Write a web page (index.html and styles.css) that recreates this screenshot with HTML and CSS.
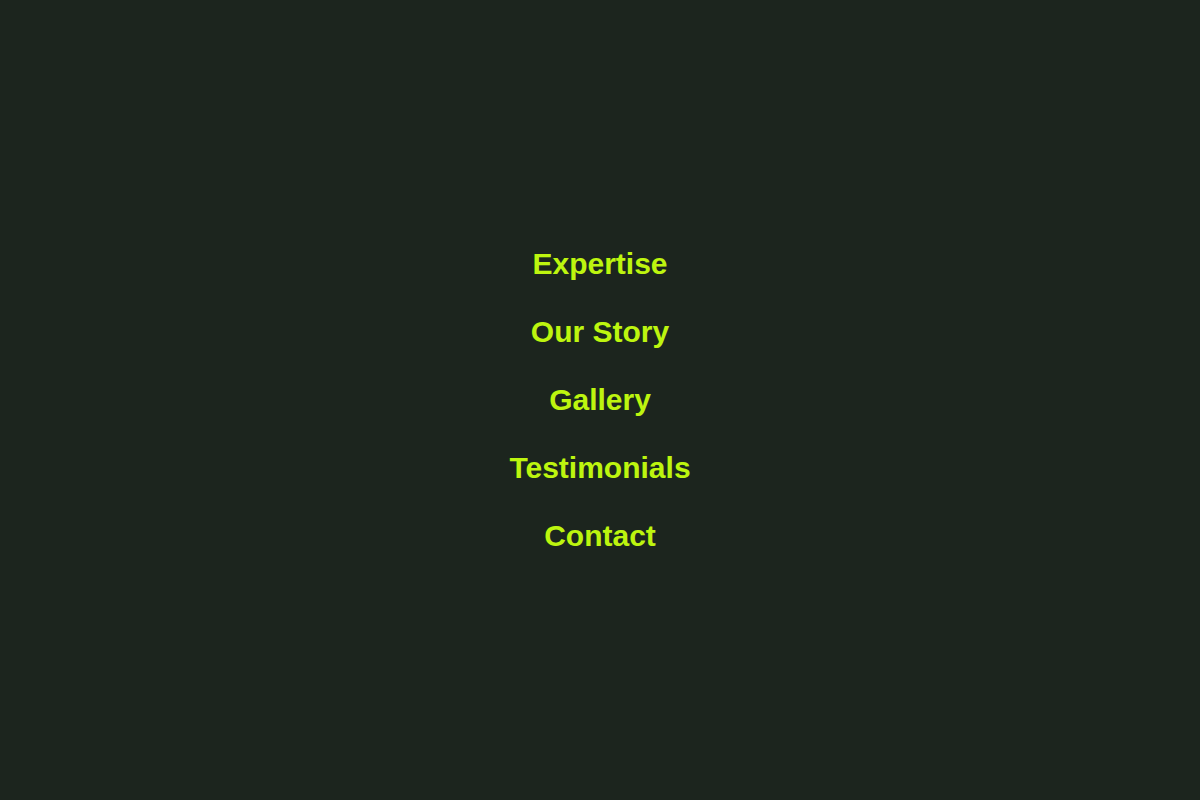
FILE: index.html
```html
<!DOCTYPE html>
<html lang="en">
<head>
<meta charset="utf-8">
<title>Menu</title>
<link rel="stylesheet" href="styles.css">
</head>
<body>
<nav class="menu">
  <a class="menu-link" href="#">Expertise</a>
  <a class="menu-link" href="#">Our Story</a>
  <a class="menu-link" href="#">Gallery</a>
  <a class="menu-link" href="#">Testimonials</a>
  <a class="menu-link" href="#">Contact</a>
</nav>
</body>
</html>
```

FILE: styles.css
```css
html, body {
  margin: 0;
  padding: 0;
  height: 100%;
}
body {
  background: #1c251e;
  font-family: "Liberation Sans", Arial, sans-serif;
}
.menu {
  height: 100%;
  display: flex;
  flex-direction: column;
  align-items: center;
  justify-content: center;
  gap: 32px;
}
.menu-link {
  color: #bdf50f;
  font-size: 30px;
  font-weight: 700;
  line-height: 36px;
  text-decoration: none;
}
```
